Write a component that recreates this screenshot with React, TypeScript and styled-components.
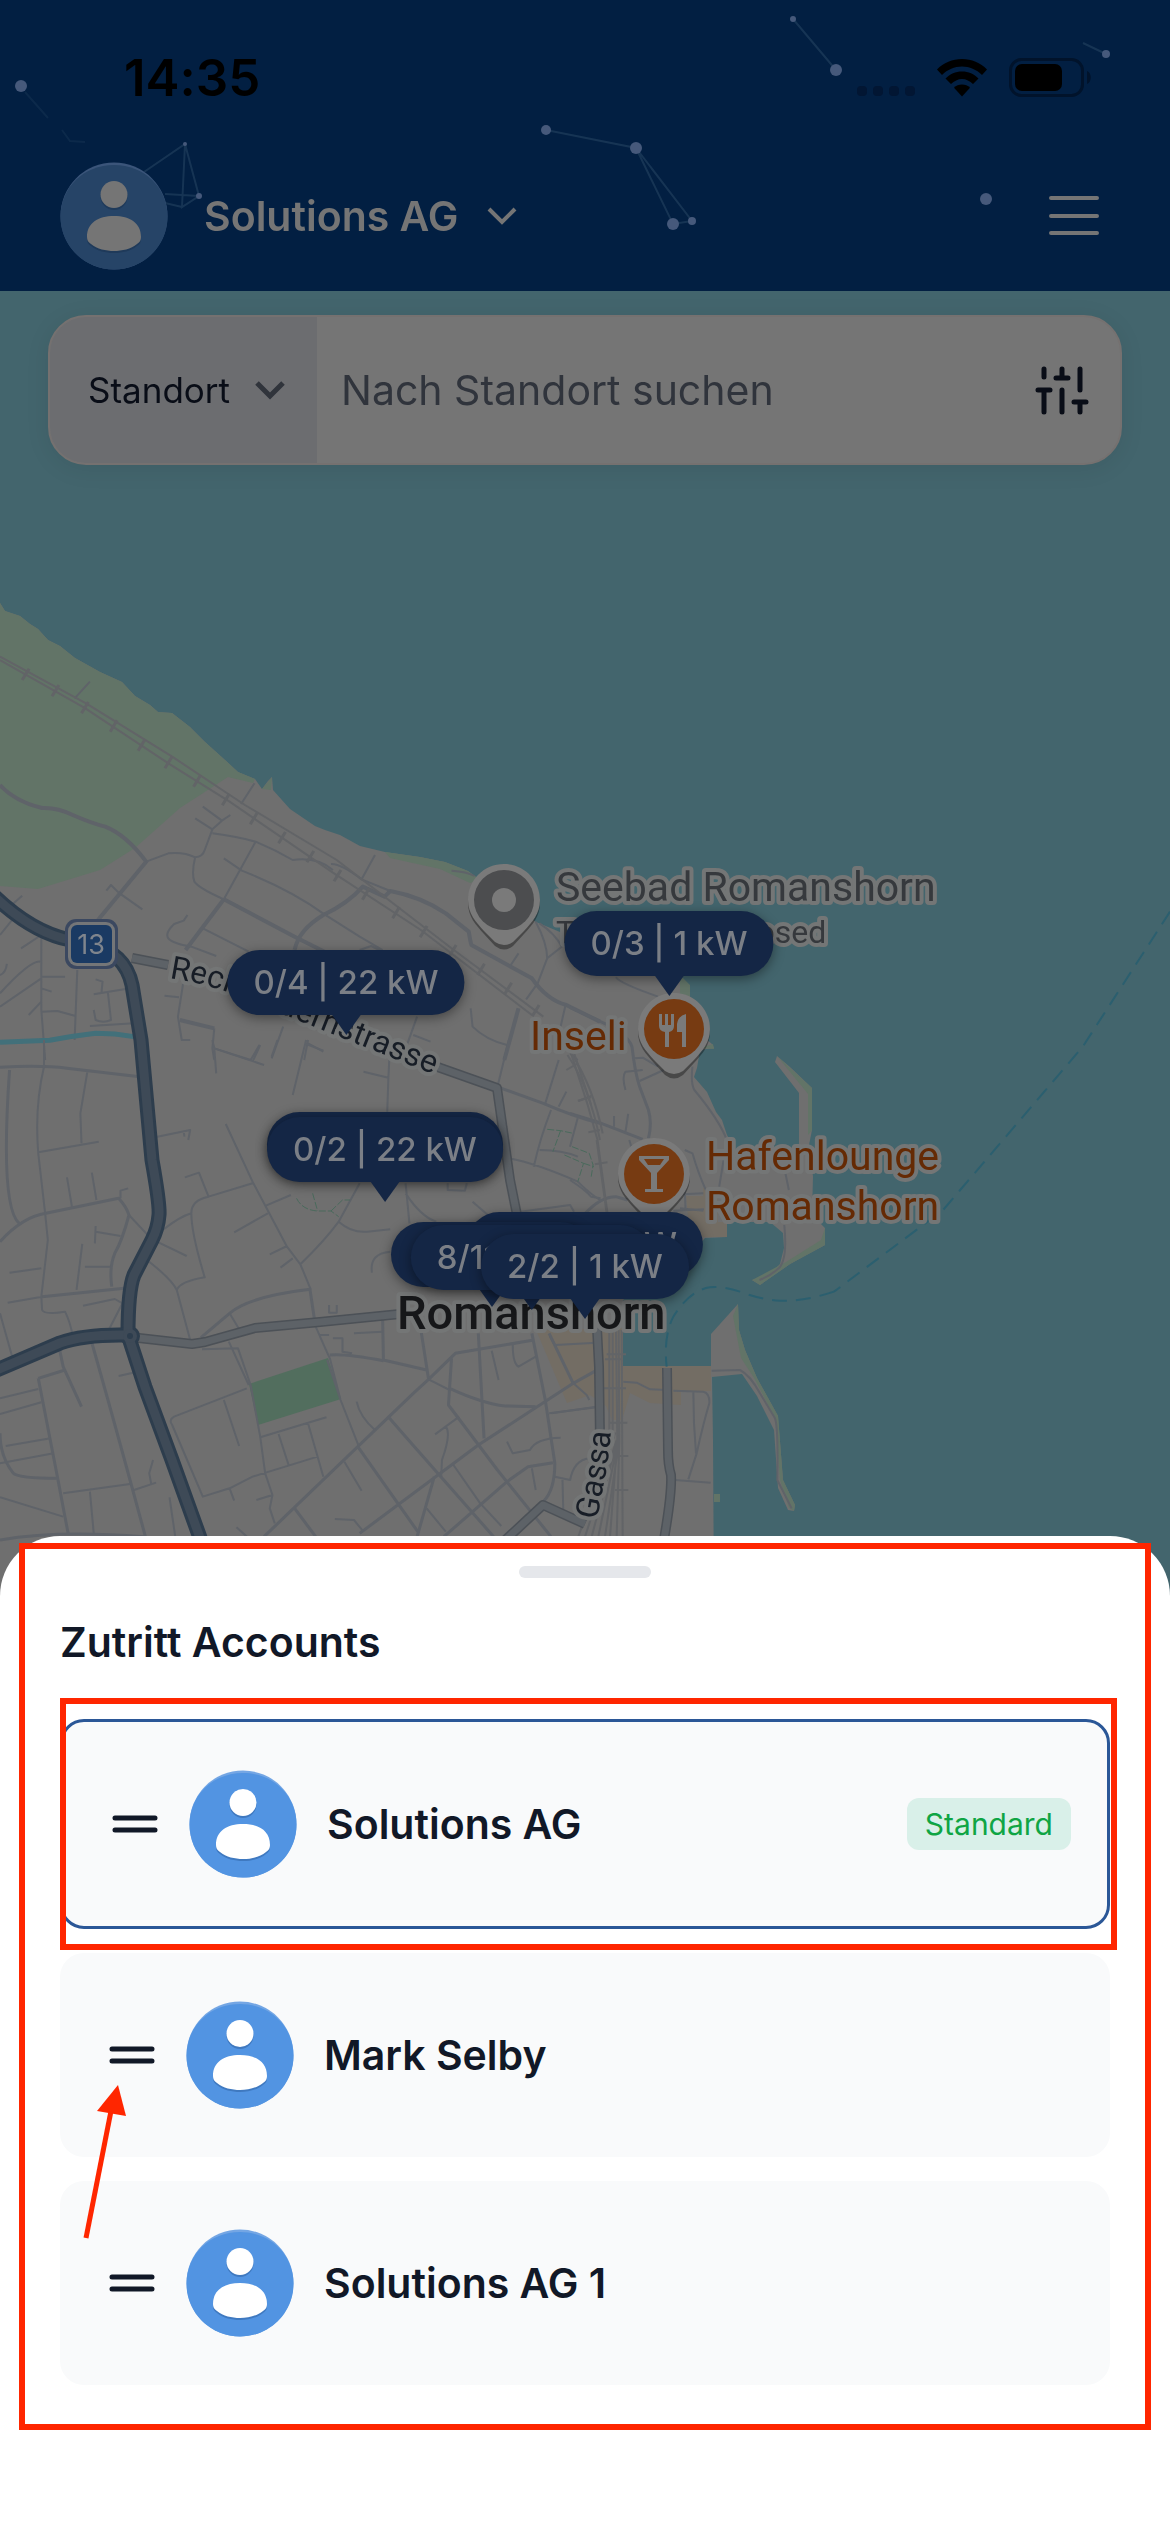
import React from "react";
import styled, { createGlobalStyle } from "styled-components";

const colors = {
  header: "#021f42",
  dimWhite: "#757575",
  water: "#43656d",
  land: "#6f6f6f",
  park: "#627467",
  pitch: "#526e5e",
  district: "#736d64",
  street: "#5f6369",
  rail: "#626467",
  pin: "#142645",
  poi: "#773b12",
  poiText: "#652a04",
  ink: "#111827",
  mark: "#ff2600",
};

const GlobalStyle = createGlobalStyle`
  *, *::before, *::after { box-sizing: border-box; }
  body { margin: 0; background: #fff; font-family: Inter, "Noto Sans", sans-serif; font-variant-ligatures: none; }
  button, input, select { font: inherit; color: inherit; border: 0; padding: 0; margin: 0; background: none; }
`;

const Screen = styled.div`
  min-height: 100vh;
  display: flex;
  flex-direction: column;
  overflow: hidden;
`;

/* ---------- header ---------- */

const Header = styled.header`
  position: relative;
  background: ${colors.header};
`;

const Stars = styled.svg`
  position: absolute;
  inset: 0;
  width: 100%;
  height: 100%;
`;

const StatusBar = styled.div`
  position: relative;
  display: flex;
  align-items: center;
  justify-content: space-between;
  height: 156px;
  padding: 0 78px 0 124px;
  color: #000;
`;

const Clock = styled.time`
  font-size: 51px;
  line-height: 60px;
  font-weight: 600;
`;

const StatusIcons = styled.div`
  display: flex;
  align-items: center;
  gap: 22px;
`;

const NavBar = styled.nav`
  position: relative;
  display: flex;
  align-items: center;
  justify-content: space-between;
  padding: 6px 60px 21px;
  color: ${colors.dimWhite};
`;

const AccountButton = styled.button`
  display: flex;
  align-items: center;
`;

const AccountName = styled.span`
  margin: 0 28px 0 36px;
  font-size: 41px;
  line-height: 48px;
  font-weight: 600;
`;

const MenuButton = styled.button`
  display: grid;
  place-items: center;
  width: 72px;
  height: 72px;
`;

/* ---------- map ---------- */

const MapArea = styled.main`
  position: relative;
  flex: 1 0 1309px;
  padding: 24px 48px;
  background: ${colors.water};
`;

const MapSvg = styled.svg`
  position: absolute;
  inset: 0;
  width: 100%;
  height: 100%;
`;

const SearchBar = styled.form`
  position: relative;
  display: flex;
  height: 150px;
  border: 2px solid #757170;
  border-radius: 38px;
  background: ${colors.dimWhite};
  box-shadow: 0 4px 24px rgba(0, 0, 0, 0.08);
  overflow: hidden;
`;

const SearchKind = styled.label`
  position: relative;
  display: flex;
  align-items: center;
  flex: none;
  width: 267px;
  background: #6c6d70;
`;

const KindSelect = styled.select`
  appearance: none;
  width: 100%;
  height: 100%;
  padding: 0 68px 0 38px;
  font-size: 35px;
  line-height: 42px;
  color: #090d17;
`;

const KindArrow = styled.svg`
  position: absolute;
  right: 32px;
  pointer-events: none;
`;

const SearchInput = styled.input`
  flex: 1;
  min-width: 0;
  padding: 0 24px;
  font-size: 41px;
  color: #30343c;
  &::placeholder {
    color: #30343c;
    opacity: 1;
  }
`;

const FilterButton = styled.button`
  flex: none;
  width: 116px;
  display: grid;
  place-items: center;
`;

const ChargePin = styled.button<{ $x: number; $y: number; $w?: number }>`
  position: absolute;
  left: ${(p) => (p.$x / 1170) * 100}%;
  top: ${(p) => p.$y - 291}px;
  ${(p) => (p.$w ? `width: ${p.$w}px;` : "")}
  height: 65px;
  padding: 0 26px;
  transform: translateX(-50%);
  border-radius: 33px;
  background: ${colors.pin};
  box-shadow: 0 3px 12px rgba(0, 0, 0, 0.4);
  color: #7b7f86;
  font-size: 33px;
  line-height: 65px;
  font-weight: 500;
  white-space: nowrap;
  &::after {
    content: "";
    position: absolute;
    left: 50%;
    top: 64px;
    transform: translateX(-50%);
    border: solid transparent;
    border-width: 21px 15px 0;
    border-top-color: ${colors.pin};
  }
`;

/* ---------- sheet ---------- */

const Sheet = styled.section`
  position: relative;
  margin-top: -64px;
  padding: 30px 60px 147px;
  border-radius: 60px 60px 0 0;
  background: #fff;
  color: ${colors.ink};
`;

const SheetHandle = styled.div`
  width: 132px;
  height: 12px;
  margin: 0 auto 40px;
  border-radius: 6px;
  background: #e5e7eb;
`;

const SheetTitle = styled.h1`
  margin: 0 0 53px;
  font-size: 41px;
  line-height: 48px;
  font-weight: 600;
`;

const AccountList = styled.ul`
  display: flex;
  flex-direction: column;
  gap: 24px;
  margin: 0;
  padding: 0;
  list-style: none;
`;

const AccountItem = styled.li`
  position: relative;
`;

const AccountCard = styled.div<{ $active?: boolean }>`
  display: flex;
  align-items: center;
  padding: 48px 36px 48px 48px;
  border: ${(p) => (p.$active ? "3px solid #2b5797" : "0")};
  border-radius: 24px;
  background: #f9fafb;
`;

const DragButton = styled.button`
  display: grid;
  place-items: center;
  width: 48px;
  height: 48px;
  margin-right: 30px;
  cursor: grab;
`;

const CardName = styled.span`
  flex: 1;
  margin-left: 30px;
  font-size: 41px;
  line-height: 48px;
  font-weight: 600;
`;

const DefaultTag = styled.span`
  padding: 8px 18px;
  border-radius: 12px;
  background: #d9f0e9;
  color: #0fa544;
  font-size: 30px;
  line-height: 36px;
`;

/* ---------- annotations ---------- */

const SheetFrame = styled.div`
  position: absolute;
  inset: 7px 19px 102px;
  border: 6px solid ${colors.mark};
  pointer-events: none;
`;

const CardFrame = styled.div`
  position: absolute;
  inset: -21px -7px -21px 0;
  border: 6px solid ${colors.mark};
  pointer-events: none;
`;

const MarkArrow = styled.svg`
  position: absolute;
  z-index: 1;
  left: 20px;
  top: 128px;
  pointer-events: none;
`;

/* ---------- drawings ---------- */

function Avatar({ dim }: { dim?: boolean }) {
  return (
    <svg width="108" height="108" viewBox="0 0 108 108" aria-hidden="true">
      <circle cx="54" cy="54" r="53.5" fill={dim ? "#3b557a" : "#74a6e4"} />
      <path d="M.5 55C.5 25 24 3 54 3s53.500 22 53.500 52c0 29-24 52.500-53.500 52.500S.5 84 .5 55z" fill={dim ? "#264467" : "#5294e2"} />
      <g fill={dim ? "#1f3a5a" : "#3f79c0"} transform="translate(0 2)">
        <Person />
      </g>
      <g fill={dim ? colors.dimWhite : "#fff"}>
        <Person />
      </g>
    </svg>
  );
}

function Person() {
  return (
    <>
      <circle cx="54" cy="32.500" r="13.500" />
      <path d="M27 75C27 61 38 54 54 54S81 61 81 75C81 78 80 80 77 82C71 87 62 89 54 89S37 87 31 82C28 80 27 78 27 75Z" />
    </>
  );
}

function Chevron({ color, width }: { color: string; width: number }) {
  return (
    <svg width="30" height="20" viewBox="0 0 30 20" fill="none" stroke={color} strokeWidth={width} aria-hidden="true">
      <path d="M2 3L15 16L28 3" />
    </svg>
  );
}

function Constellation() {
  return (
    <Stars viewBox="0 0 1170 291" preserveAspectRatio="xMidYMid slice" aria-hidden="true">
      <g stroke="#2b4a66" strokeWidth="2" fill="none" opacity=".5">
        <path d="M25 92L48 118M62 130L70 141L85 142" opacity=".5" />
        <path d="M546 130L636 148L673 224L692 221L636 148M793 19L836 70M1083 43L1106 54M185 144L199 196L182 207L185 144L144 172M165 194L199 196M165 203L182 207" />
      </g>
      <g fill="#46597b">
        <circle cx="21" cy="86" r="6" />
        <circle cx="546" cy="130" r="5" />
        <circle cx="636" cy="148" r="6" />
        <circle cx="673" cy="224" r="6" />
        <circle cx="692" cy="221" r="4" />
        <circle cx="793" cy="19" r="3" />
        <circle cx="836" cy="70" r="6" />
        <circle cx="1106" cy="54" r="4" />
        <circle cx="986" cy="199" r="6" />
        <circle cx="185" cy="144" r="2" />
        <circle cx="199" cy="196" r="3" />
      </g>
    </Stars>
  );
}

const CellDots = () => (
  <svg width="58" height="60" viewBox="0 0 58 60" fill="#021633" aria-hidden="true">
    {[0, 16, 32, 48].map((x) => (
      <rect key={x} x={x} y="38" width="10" height="10" rx="4" />
    ))}
  </svg>
);

const Wifi = () => (
  <svg width="50" height="38" viewBox="0 0 50 38" aria-hidden="true">
    <path d="M25 0C34.500 0 43.500 3.700 50 10.500L45 16C39.500 10.500 32.500 7.500 25 7.500S10.500 10.500 5 16L0 10.500C6.500 3.700 15.500 0 25 0Z" />
    <path d="M25 12.500C31.500 12.500 37 15 41.500 19.500L36 25C33 22 29 20 25 20S17 22 14 25L8.500 19.500C13 15 18.500 12.500 25 12.500Z" />
    <path d="M25 25.500C28 25.500 31 26.700 33 28.700L25 37.500L17 28.700C19 26.700 22 25.500 25 25.500Z" />
  </svg>
);

const Battery = () => (
  <svg width="83" height="40" viewBox="0 0 83 40" aria-hidden="true">
    <rect x="1.500" y="1.500" width="72" height="36" rx="11" fill="none" stroke="#01132b" strokeWidth="3" />
    <rect x="6" y="6" width="47" height="27" rx="7" />
    <path d="M78 13C83 15 83 24 78 26Z" fill="#01132b" />
  </svg>
);

const RAIL_TIES: [number, number][] = [
  [67, 343], [145, 392], [222, 443], [297, 498], [370, 555], [440, 608], [515, 663], [590, 719], [663, 776], [737, 833],
  [811, 890], [882, 947], [956, 1002], [1035, 1058], [1107, 1115], [1183, 1172], [1257, 1228], [1328, 1285], [1400, 1352],
];

const TILE = "scale(.38265 .33333)";

const NORTH_MAIN =
  "M0 675Q40 725 110 744Q150 742 190 765Q240 790 275 800Q330 825 382 905L256 1080M585 1018L485 1170M585 1018L770 1130L900 1205M770 1170Q780 1110 845 1065Q910 1030 948 980L1005 1010L1020 993Q1100 1010 1165 1060L1225 1115Q1230 1150 1232 1155L1390 1255Q1430 1320 1480 1335L1568 1385M470 1380L560 1405M1355 1345L1318 1500";
const NORTH_MINOR =
  "M195 415L235 365M630 732L665 670M530 740L580 782L602 765M580 782L555 808L510 775M555 808L535 870Q530 890 510 892Q480 875 440 880L382 905M510 892Q500 940 508 965Q520 985 585 1018L668 845M555 820Q620 830 668 845Q720 870 765 900Q830 890 870 930M585 895L632 932Q760 990 848 1063L940 1130L1000 1170M865 912Q890 910 945 958L980 885M945 958L1020 993M530 1105L650 1175M440 1135Q430 1120 455 1092L480 1082L490 1065M440 1135Q450 1150 500 1160L565 1188M278 992L290 975L310 998L372 1048M25 1040L58 1007M35 1075L0 1125M55 1165L108 1125L108 1350L118 1500M0 1245Q15 1240 18 1212M0 1300Q80 1200 105 1205M110 1250L170 1250M0 1340L108 1255M108 1285L135 1295M75 1365L108 1325M108 1355L150 1353L195 1367M202 1230L195 1440M245 1303L340 1285M265 1300L268 1265L250 1258M282 1298L290 1380Q270 1390 250 1380L245 1350M235 1398L350 1390M480 1260L465 1370L475 1440L497 1440M430 1307L468 1312M560 1405L555 1465L560 1500M560 1465L655 1500L678 1455M740 1400L710 1495M805 1440L795 1500M805 1450L845 1475M1090 1370L1065 1450M1080 1425L1125 1445M940 1170L970 1158L1000 1175M1180 932Q1220 935 1240 948M1400 1085Q1430 1150 1430 1195L1405 1270L1375 1318M1410 1090Q1450 1120 1468 1160L1430 1195M1335 1215L1355 1180M1230 1345L1235 1400Q1270 1440 1325 1455M1478 1335L1465 1400";
const EAST_MAIN =
  "M0 562L80 605Q150 640 162 680Q170 760 182 800L205 870Q215 910 205 955M0 880L70 905L190 958M40 1180Q80 1130 120 1130L150 1140";
const EAST_MINOR =
  "M120 472Q130 490 230 530M145 810Q135 770 145 755L190 750M170 715L190 713L230 740M182 783L245 750M320 740Q315 790 325 810Q390 900 410 960L390 1100M0 700L20 720M145 935Q150 900 152 882M115 920L115 888M300 990L320 1000Q335 1060 355 1110M300 1110L302 1172M270 1172L350 1168M563 1060L572 1110M20 895L0 980M0 1080Q40 1110 55 1130L80 1135M165 1000L155 960M560 1215Q570 1330 540 1350Q520 1370 495 1380";
const WEST_MAIN =
  "M0 82Q110 75 175 85L365 110M25 90Q0 500 50 550M0 605Q60 530 120 520L310 475Q330 500 337 525Q320 600 300 640Q285 680 292 740M110 770L325 745M525 893L600 820Q650 770 810 748L822 840M1298 140L1420 190Q1500 230 1568 250M100 1015L170 990M100 1015L150 1310L178 1480M35 1300Q0 1250 0 1180M35 1300Q50 1315 150 1315M238 900Q300 1150 380 1490M1000 840L1002 960L1115 990M862 945Q900 940 1002 962M1100 870L1120 1018L1080 1060L690 1490M1120 1018L1190 940L1395 900M1180 955L1172 1095L1300 1290L1440 1490M1018 1135L1075 1210L1290 1490M935 1220L1095 1480M1568 985L1498 1030L1250 1215L940 1480M1250 880L1265 1195M1175 1045Q1260 1090 1320 1098L1400 1100M1390 880L1425 1080L1450 1270Q1450 1350 1420 1385M1435 880L1498 1030M1135 1310L1090 1490M1160 1490L1325 1325L1380 1280L1445 1268M770 1405L825 1490M155 925L165 980L213 1100M0 1500Q150 1470 375 1490";
const WEST_MINOR =
  "M115 0L115 80Q90 200 100 340L118 520L125 600L108 770L110 810Q115 825 170 815Q185 850 190 890M228 97L210 220L213 310M100 337L258 305M405 292L497 270L492 300M480 275L482 290M175 412L188 500M240 398L252 480M315 475L315 452L335 445M337 525L390 590M250 558L248 610M250 575L315 588M215 612L200 750M222 680L288 680M25 698L108 685M20 788L110 770M320 790L285 868M217 797L300 777L320 790M0 820L33 955M428 568Q470 530 500 520M410 605L488 648M390 665Q450 720 462 750L497 900M462 750Q470 725 535 712Q500 580 500 520Q500 480 545 470L660 430M483 412L520 398L545 470M590 252L660 425L750 620L785 673L812 748M695 497L760 465M612 577L700 520M705 643L750 618M733 683L765 655M555 0L560 25L690 75M560 25L565 100M725 0L710 50M660 65L680 15M800 0L765 165M800 12L845 32M950 95L1015 113L1012 215M1015 113L1020 0M940 430L885 545Q850 600 785 673M885 545Q920 580 960 575L1020 568M1060 430L1070 550M1060 460Q1100 530 1140 545M1170 430L1170 450L1215 452L1220 430M972 698Q965 640 1020 635M1330 355Q1400 370 1510 425Q1540 460 1568 480M1395 380Q1410 300 1440 210M1480 155L1460 200M1460 60L1425 190M1330 0L1300 140M1410 330Q1470 330 1510 350M1235 485L1290 540M1360 515L1490 495L1500 515M600 820L625 868M860 795L860 818L880 818L880 795M825 860L850 925L862 955L890 1080M835 885L860 885M870 895L895 895L895 935L920 940M925 880L1000 875M598 905L650 1035M528 928L622 925L655 1035L680 1190L693 1300L712 1365L705 1405L718 1450M645 1045L455 1130Q440 1140 450 1155L530 1370L600 1345L660 1310L830 1250M585 1080L625 1218M680 1192L853 1132M728 1182L755 1278M805 1150L845 1310M932 1085Q940 1130 980 1170M900 1265L945 1352M855 960L890 1080L938 1220M0 1075L100 1047M0 1122L108 1087M15 1218L132 1195M0 1270L140 1240M165 1360L340 1332M350 1350L408 1328M400 1260L390 1300L395 1330M235 1355L245 1480M443 1372L458 1490M0 1372L165 1430M310 1008L360 995M1285 932L1303 1020M1340 915Q1340 970 1355 980L1400 950M1120 1018L1175 1050M1200 1130L1137 1183M1165 1160Q1180 1180 1155 1260L1153 1310M1325 1205L1340 1240L1385 1230Q1400 1195 1465 1193M1435 1120L1568 1100M1185 1275L1255 1390L1310 1458M1390 1285L1400 1350M1115 1405L1165 1475M875 1437L925 1440L950 1475M618 1462L650 1495M600 1345L612 1382M670 1380L712 1365M1450 1310L1490 1320Q1500 1260 1540 1255M1470 1320L1472 1410";
const HARBOUR_MINOR =
  "M760 725L800 728L840 748L890 750M910 752L1000 755Q1020 760 1018 790Q1000 850 980 940L955 1018M970 755Q970 850 978 940M915 1020L1022 1028M1025 692L1110 690Q1140 705 1170 760L1215 835Q1225 860 1222 1020L1265 1105M540 590L555 615L680 608M545 820L680 800M605 725L650 765L658 780M780 170L1000 160M930 205L1000 212";
const GREEN_PATHS =
  "M775 475Q790 510 830 513L865 513L885 530M817 460L830 513M865 513L895 480L915 480M1430 268L1465 272L1498 280M1465 272L1445 335M1495 320L1540 340L1550 375L1545 410M1475 345L1525 370L1510 425M1525 370L1552 380";

function MapPin({ x, y, fill, children }: { x: number; y: number; fill: string; children: React.ReactNode }) {
  return (
    <g transform={`translate(${x} ${y})`}>
      <path d="M0 -36C20 -36 36 -20 36 0C36 14 28 22 20 31L9 43Q0 50 -9 43L-20 31C-28 22 -36 14 -36 0C-36 -20 -20 -36 0 -36Z" fill="#000" opacity=".35" transform="translate(0 3)" />
      <path d="M0 -36C20 -36 36 -20 36 0C36 14 28 22 20 31L9 42Q0 48 -9 42L-20 31C-28 22 -36 14 -36 0C-36 -20 -20 -36 0 -36Z" fill="#7a7a7a" />
      <circle r="30" fill={fill} />
      {children}
    </g>
  );
}

const Streets = styled.path<{ $w: number; $c?: string }>`
  fill: none;
  stroke: ${(p) => p.$c || colors.street};
  stroke-width: ${(p) => p.$w}px;
  stroke-linejoin: round;
  vector-effect: non-scaling-stroke;
`;

const MapLabel = styled.text<{ $size: number; $c: string; $bold?: boolean }>`
  font-family: Roboto, "Liberation Sans", sans-serif;
  font-size: ${(p) => p.$size}px;
  font-weight: ${(p) => (p.$bold ? 500 : 400)};
  fill: ${(p) => p.$c};
  stroke: #747676;
  stroke-width: 8px;
  stroke-linejoin: round;
  paint-order: stroke;
`;

function CityMap() {
  const r1 = "M-10 892Q30 932 70 940L90 945Q125 952 132 985L141 1040L152 1160Q160 1205 159 1215Q158 1228 152 1240L134 1275Q128 1290 128 1335";
  const r2 = "M-10 1373L60 1343Q85 1334 128 1335";
  const r3 = "M128 1335L145 1387L172 1460L208 1560";
  const mid = [
    "M130 1337L192 1344L205 1342L255 1328L320 1322L400 1314",
    "M432 1065L497 1088L510 1180L517 1215",
    "M597 1328L599 1367L600 1440",
    "M667 1368L668 1450Q668 1465 671 1475Q672 1495 663 1545",
    "M500 1545L543 1505L585 1524",
    "M132 958L168 965",
  ];
  return (
    <MapSvg viewBox="0 291 1170 1309" preserveAspectRatio="xMidYMin slice" role="img" aria-label="Karte Romanshorn">
      <path
        fill={colors.land}
        d="M0 603L5 611L20 616L30 624L38 629L48 640L60 646L75 658L100 672L122 682L135 696L150 705L158 712L172 713L190 727L205 742L225 760L238 772L255 779L262 789L268 781L272 777L273 790L290 809L315 826L325 830L340 835L360 846L385 852L420 857L445 862L468 871L500 895L536 922L560 932L640 960L681 982L690 985L690 997L695 1030L712 1044L714 1048L700 1050L697 1068L694 1077L707 1092L716 1112L722 1120L727 1135L735 1150L799 1150L799 1093L775 1062L777 1056L790 1067L812 1088L812 1130L808 1150L813 1176L812 1215L825 1228L825 1245L790 1264L760 1285L752 1280L768 1276L780 1264L784 1248L783 1233L770 1222L727 1222L727 1237L705 1238L690 1255L623 1300L623 1366L711 1366L711 1334L738 1304L739 1330L745 1350L757 1378L778 1416L783 1480L795 1505L794 1511L788 1510L778 1488L774 1430L757 1396L742 1374L712 1377L713 1440L714 1600L0 1600Z"
      />
      <path fill={colors.park} d="M0 603L5 611L20 616L30 624L38 629L48 640L60 646L75 658L100 672L122 682L135 696L150 705L158 712L172 713L190 727L205 742L225 760L238 772L255 779L253 783L228 777L180 808L135 848L100 870L38 889L0 886Z" />
      <path fill={colors.park} d="M385 852L420 857L445 862L468 871L480 880L470 883L440 869L390 858ZM262 789L272 777L271 790ZM680 975L690 985L690 997L680 995ZM700 1048L713 1044L714 1049ZM738 1304L739 1330L745 1350L757 1378L778 1416L783 1480L795 1505L794 1511L789 1508L780 1480L775 1418L754 1378L741 1358L733 1316ZM812 1088L812 1130L808 1135L808 1094L777 1056ZM825 1228L825 1245L790 1264L760 1285L752 1280L786 1262L821 1240ZM714 1494H720V1502H714Z" />
      <path fill={colors.pitch} d="M249 1384L328 1358L341 1399L258 1425Z" />
      <path fill={colors.district} d="M536 1330L623 1328L623 1366L711 1366L711 1391L681 1391L681 1405L650 1403L630 1393L622 1420L612 1420L606 1406L590 1395L567 1403ZM686 1196H703V1188H718V1222H727V1237H690Z" />

      <g transform={`translate(0 560) ${TILE}`}>
        <Streets $w={4} d={NORTH_MAIN} />
        <Streets $w={2} d={NORTH_MINOR} />
        <Streets $w={2} $c={colors.rail} d="M0 300L220 443L440 610L600 725L870 938L1100 1110L1390 1365M0 290L225 430L450 590L640 735L880 900L1180 1165L1420 1370" />
        <Streets $w={3} $c={colors.rail} d={RAIL_TIES.map(([x, y]) => `M${x - 9} ${y + 17}L${x + 9} ${y - 17}`).join("")} />
        <Streets $w={5} $c="#42707a" d="M0 1447L130 1441Q190 1428 250 1420Q300 1420 350 1430" />
      </g>
      <g transform={`translate(570 820) ${TILE}`}>
        <Streets $w={3} d={EAST_MAIN} />
        <Streets $w={2} d={EAST_MINOR} />
        <Streets $w={2} $c={colors.rail} d="M0 690L45 850L72 960L98 1180M8 690L55 855M22 843L55 828M48 937L78 930M65 1033L98 1027" />
        <Streets $w={2} $c="#2b5f6f" strokeDasharray="15 9" d="M1568 275L1340 680L975 1170L690 1415" />
      </g>
      <g transform={`translate(0 1040) ${TILE}`}>
        <Streets $w={3} d={WEST_MAIN} />
        <Streets $w={2} d={WEST_MINOR} />
        <Streets $w={2} $c={colors.rail} d="M1483 45Q1540 140 1568 300M1493 40Q1550 140 1575 280M1480 90L1510 70M1510 182L1545 172" />
        <Streets $w={1} $c="#4a6a5c" strokeDasharray="7 2" d={GREEN_PATHS} />
      </g>
      <g transform="translate(370 1140) scale(.33333)">
        <Streets $w={2} d={HARBOUR_MINOR} />
        <Streets $w={2} $c="#2b5f6f" strokeDasharray="15 9" d="M1392 455Q1300 485 1230 482Q1170 478 1110 455Q1060 438 1020 442Q960 450 910 530Q880 590 890 680" />
        <Streets
          $w={2}
          $c={colors.rail}
          d="M680 0L710 220M718 570L718 880M728 570L728 900M738 570L742 900L720 1190M746 570L748 900L740 1190M755 570L758 1190M708 880L735 880L625 1190M740 900L645 1190M742 900L665 1190M745 900L685 1190M748 900L705 1190M710 643H768M705 658H755M700 745H768M720 848H772M735 948H775M735 1050H775"
        />
      </g>

      <g fill="none" strokeLinejoin="round">
        {mid.map((d) => (
          <path key={d} d={d} stroke="#4c5157" strokeWidth="10" />
        ))}
        {mid.map((d) => (
          <path key={d} d={d} stroke="#5d6267" strokeWidth="7" />
        ))}
        {[r1, r2, r3].map((d) => (
          <path key={d} d={d} stroke="#2d3d4d" strokeWidth="15" />
        ))}
        <circle cx="130" cy="1336" r="10" fill="#2d3d4d" />
        {[r1, r2, r3].map((d) => (
          <path key={d} d={d} stroke="#3e4a57" strokeWidth="9" />
        ))}
      </g>
      <circle cx="130" cy="1336" r="7" fill="#3e4a57" />
      <circle cx="130" cy="1336" r="3" fill="#2d3d4d" />

      <rect x="65" y="919" width="53" height="50" rx="11" fill="#3b4860" />
      <rect x="68" y="922" width="47" height="44" rx="9" fill="#747678" />
      <rect x="71" y="925" width="41" height="38" rx="6" fill="#1a3a63" />
      <text x="91" y="954" textAnchor="middle" fontFamily="Inter, sans-serif" fontSize="27" fill="#7f858d">13</text>

      <path id="reck" d="M169 978Q215 985 250 1001L450 1081" fill="none" />
      <MapLabel $size={32} $c="#171d26">
        <textPath href="#reck">Reckholdernstrasse</textPath>
      </MapLabel>
      <path id="gassa" d="M597 1520L605 1478Q611 1450 612 1400" fill="none" />
      <MapLabel $size={32} $c="#171d26">
        <textPath href="#gassa">Gassa</textPath>
      </MapLabel>
      <MapLabel x="556" y="901" $size={41} $c="#36393d">Seebad Romanshorn</MapLabel>
      <MapLabel x="556" y="943" $size={32} $c="#36393d">Temporarily closed</MapLabel>
      <MapLabel x="530" y="1050" $size={41} $c={colors.poiText}>Inseli</MapLabel>
      <MapLabel x="706" y="1170" $size={41} $c={colors.poiText}>Hafenlounge</MapLabel>
      <MapLabel x="706" y="1220" $size={41} $c={colors.poiText}>Romanshorn</MapLabel>
      <MapLabel x="397" y="1329" $size={47} $bold $c="#161719">Romanshorn</MapLabel>

      <MapPin x={504} y={900} fill="#4c4d4f">
        <circle r="12" fill="#7a7a7a" />
      </MapPin>
      <MapPin x={674} y={1029} fill={colors.poi}>
        <path fill="#7a7a7a" d="M-15 -15H-12V-4H-9V-15H-6V-4H-3V-15H0V-3Q0 2 -5 3V18H-9V3Q-15 2 -15 -3ZM12 -15V18H8V3H3V-5Q4 -13 12 -15Z" />
      </MapPin>
      <MapPin x={654} y={1174} fill={colors.poi}>
        <path fill="#7a7a7a" d="M-15 -18H15V-14L3 -1V15H9V18H-9V15H-3V-1L-15 -14ZM-10 -15L-6 -9H6L10 -15Z" fillRule="evenodd" />
      </MapPin>
    </MapSvg>
  );
}

const PINS: { x: number; y: number; label: string; w?: number }[] = [
  { x: 346, y: 950, label: "0/4 | 22 kW" },
  { x: 669, y: 911, label: "0/3 | 1 kW" },
  { x: 385, y: 1112, label: "", w: 236 },
  { x: 385, y: 1117, label: "0/2 | 22 kW" },
  { x: 585, y: 1212, label: "2/4 | 22 kW" },
  { x: 492, y: 1222, label: "", w: 202 },
  { x: 532, y: 1225, label: "8/11 | 22 kW" },
  { x: 585, y: 1234, label: "2/2 | 1 kW" },
];

const ACCOUNTS = [
  { name: "Solutions AG", isDefault: true },
  { name: "Mark Selby", arrow: true },
  { name: "Solutions AG 1" },
];

export default function App() {
  return (
    <Screen>
      <GlobalStyle />
      <Header>
        <Constellation />
        <StatusBar>
          <Clock>14:35</Clock>
          <StatusIcons>
            <CellDots />
            <Wifi />
            <Battery />
          </StatusIcons>
        </StatusBar>
        <NavBar>
          <AccountButton type="button">
            <Avatar dim />
            <AccountName>Solutions AG</AccountName>
            <Chevron color={colors.dimWhite} width={4} />
          </AccountButton>
          <MenuButton type="button" aria-label="Menü">
            <svg width="50" height="42" viewBox="0 0 50 42" stroke={colors.dimWhite} strokeWidth="4" strokeLinecap="round">
              <path d="M2 3H48M2 21H48M2 38H48" />
            </svg>
          </MenuButton>
        </NavBar>
      </Header>

      <MapArea>
        <CityMap />
        <SearchBar onSubmit={(e) => e.preventDefault()}>
          <SearchKind>
            <KindSelect aria-label="Suchtyp" defaultValue="Standort">
              <option>Standort</option>
            </KindSelect>
            <KindArrow width="30" height="20" viewBox="0 0 30 20" fill="none" stroke="#30343b" strokeWidth="5">
              <path d="M2 3L15 16L28 3" />
            </KindArrow>
          </SearchKind>
          <SearchInput type="text" placeholder="Nach Standort suchen" aria-label="Nach Standort suchen" />
          <FilterButton type="button" aria-label="Filter">
            <svg width="54" height="54" viewBox="0 0 54 54" fill="none" stroke="#090d17" strokeWidth="5" strokeLinecap="round">
              <path d="M9 6V14M3 27H15M9 27V49M27 6V15M21 15H33M27 27V49M45 6V27M39 39H51M45 39V49" />
            </svg>
          </FilterButton>
        </SearchBar>
        {PINS.map((p) => (
          <ChargePin key={`${p.x}-${p.y}`} type="button" $x={p.x} $y={p.y} $w={p.w}>
            {p.label}
          </ChargePin>
        ))}
      </MapArea>

      <Sheet>
        <SheetHandle />
        <SheetTitle>Zutritt Accounts</SheetTitle>
        <AccountList>
          {ACCOUNTS.map((a) => (
            <AccountItem key={a.name}>
              <AccountCard $active={a.isDefault}>
                <DragButton type="button" aria-label={`${a.name} verschieben`}>
                  <svg width="46" height="18" viewBox="0 0 46 18" stroke={colors.ink} strokeWidth="5" strokeLinecap="round">
                    <path d="M3 3H43M3 15H43" />
                  </svg>
                </DragButton>
                <Avatar />
                <CardName>{a.name}</CardName>
                {a.isDefault && <DefaultTag>Standard</DefaultTag>}
              </AccountCard>
              {a.isDefault && <CardFrame />}
              {a.arrow && (
                <MarkArrow width="50" height="162" viewBox="0 0 50 162" aria-hidden="true">
                  <path d="M6 157L31 30" stroke={colors.mark} strokeWidth="5" />
                  <path d="M38 4L17 30L46 35Z" fill={colors.mark} />
                </MarkArrow>
              )}
            </AccountItem>
          ))}
        </AccountList>
        <SheetFrame />
      </Sheet>
    </Screen>
  );
}
